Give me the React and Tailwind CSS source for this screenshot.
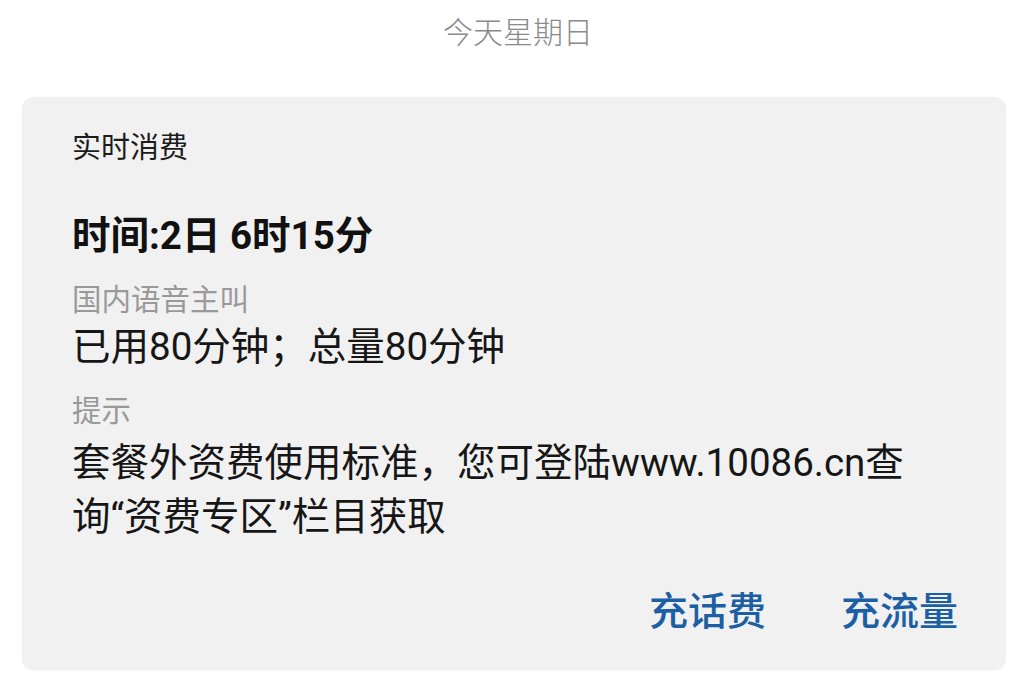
import React from 'react';

const font = { fontFamily: '"Roboto", "Noto Sans CJK SC", sans-serif' };

const Label = ({ children, className = '' }) => (
  <div className={`text-[29.5px] leading-[40px] text-[#999999] ${className}`}>{children}</div>
);

export default function App() {
  return (
    <div
      className="w-[1036px] h-[681px] bg-white overflow-hidden font-['Roboto','Noto_Sans_CJK_SC',sans-serif]"
      style={font}
    >
      {/* date header */}
      <div className="h-[64px] flex items-center justify-center text-[30px] font-light text-[#8a8a8a]">
        今天星期日
      </div>

      {/* message card */}
      <div className="mt-[33px] ml-[22px] mr-[30px] h-[573px] rounded-[12px] bg-[#f1f1f1] shadow-[0_1px_3px_rgba(0,0,0,0.04)] pl-[50px] pt-[31px] flex flex-col">
        <div className="text-[29px] leading-[40px] text-[#1c1c1c]">实时消费</div>

        <div className="mt-[44px] text-[38.5px] leading-[48px] font-bold text-[#111111]">
          时间:2日 6时15分
        </div>

        <Label className="mt-[20px]">国内语音主叫</Label>
        <div className="mt-[3px] text-[38.5px] leading-[48px] text-[#161616]">
          已用80分钟；总量80分钟
        </div>

        <Label className="mt-[20px]">提示</Label>
        <div className="mt-[5px] text-[38.5px] leading-[54px] text-[#161616] whitespace-nowrap">
          套餐外资费使用标准，您可登陆www.10086.cn查
          <br />
          询“资费专区”栏目获取
        </div>

        <div className="mt-[44px] flex justify-end gap-[75px] pr-[48px] text-[39px] leading-[48px] font-medium text-[#1d5fa5]">
          <button className="leading-[48px]">充话费</button>
          <button className="leading-[48px]">充流量</button>
        </div>
      </div>
    </div>
  );
}
